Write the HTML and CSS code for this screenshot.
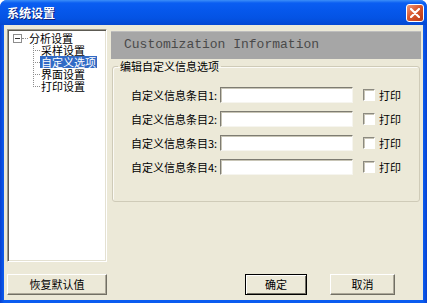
FILE: index.html
```html
<!DOCTYPE html>
<html lang="zh-CN">
<head>
<meta charset="UTF-8">
<title>系统设置</title>
<link rel="stylesheet" href="styles.css">
</head>
<body>
<div class="window">
    <div class="titlebar">
        <span class="title">系统设置</span>
        <a href="javascript:;" class="close">
            <svg width="10" height="10" viewBox="0 0 10 10"><path d="M1 1L9 9M9 1L1 9" stroke="#fff" stroke-width="2.2" stroke-linecap="round"/></svg>
        </a>
    </div>
    <div class="client">
        <div class="main">
            <div class="tree">
                <div class="root"><span class="toggle"></span><span class="link"></span><span class="tlabel">分析设置</span></div>
                <ul class="children">
                    <li><span class="tlabel">采样设置</span></li>
                    <li class="sel"><span class="tlabel">自定义选项</span></li>
                    <li><span class="tlabel">界面设置</span></li>
                    <li class="last"><span class="tlabel">打印设置</span></li>
                </ul>
            </div>
            <div class="panel">
                <div class="header">Customization Information</div>
                <fieldset class="group">
                    <legend>编辑自定义信息选项</legend>
                    <div class="rows">
                        <div class="row"><label>自定义信息条目1:</label><input class="field" type="text"><span class="check"></span><span class="print">打印</span></div>
                        <div class="row"><label>自定义信息条目2:</label><input class="field" type="text"><span class="check"></span><span class="print">打印</span></div>
                        <div class="row"><label>自定义信息条目3:</label><input class="field" type="text"><span class="check"></span><span class="print">打印</span></div>
                        <div class="row"><label>自定义信息条目4:</label><input class="field" type="text"><span class="check"></span><span class="print">打印</span></div>
                    </div>
                </fieldset>
            </div>
        </div>
        <div class="footer">
            <a href="javascript:;" class="btn restore">恢复默认值</a>
            <div class="actions">
                <a href="javascript:;" class="btn ok">确定</a>
                <a href="javascript:;" class="btn cancel">取消</a>
            </div>
        </div>
    </div>
</div>
</body>
</html>
```
FILE: styles.css
```css
body {
    margin: 0;
    background: #fff;
    font: 11px/13px "Noto Sans CJK SC", "Liberation Sans", sans-serif;
    color: #000;
}
ul {
    margin: 0;
    padding: 0;
    list-style: none;
}
.window {
    display: flex;
    flex-direction: column;
    width: 427px;
    height: 303px;
    background: linear-gradient(90deg, #0841d0, #0a5cf0 4px, #0a5cf0 423px, #0841d0);
    border-radius: 7px 7px 0 0;
}
.titlebar {
    display: flex;
    align-items: center;
    justify-content: space-between;
    height: 25px;
    padding: 0 3px 0 7px;
    border-radius: 7px 7px 0 0;
    background: linear-gradient(#3c8ff8 0, #0a5ef2 3px, #0658ec 10px, #0453e4 18px, #0348d2 25px);
}
.title {
    color: #fff;
    font-weight: bold;
    font-size: 12px;
    text-shadow: 1px 1px #0a1e7a;
}
.close {
    display: flex;
    align-items: center;
    justify-content: center;
    width: 16px;
    height: 16px;
    border: 1px solid #fff;
    border-radius: 3px;
    background: linear-gradient(135deg, #f09a7c, #d9572e 45%, #b83a16);
}
.client {
    flex: 1;
    display: flex;
    flex-direction: column;
    margin: 0 4px 3px 4px;
    padding: 4px 2px 0 3px;
    background: #ece9d8;
}
.main {
    display: flex;
}
.tree {
    width: 95px;
    height: 229px;
    background: #fff;
    border: 1px solid;
    border-color: #9d9a8c #fff #fff #9d9a8c;
    box-shadow: inset 1px 1px #5c5a52, inset -1px -1px #e4e1d2;
    padding: 2px 1px 0 2px;
}
.root {
    display: flex;
    align-items: center;
    height: 12px;
}
.toggle {
    width: 7px;
    height: 7px;
    margin-left: 3px;
    border: 1px solid #8d8d8d;
    background: linear-gradient(#333, #333) center/5px 1px no-repeat, #fff;
}
.link {
    width: 6px;
    border-top: 1px dotted #8d8d8d;
}
.tlabel {
    display: inline-block;
    padding: 0 1px;
    line-height: 12px;
    white-space: nowrap;
    vertical-align: top;
}
.children {
    margin-left: 23px;
}
.children li {
    height: 12px;
    padding-left: 7px;
    background:
        repeating-linear-gradient(#8d8d8d 0 1px, transparent 1px 2px) 0 0/1px 100% no-repeat,
        repeating-linear-gradient(90deg, #8d8d8d 0 1px, transparent 1px 2px) 0 6px/7px 1px no-repeat;
}
.children li.last {
    background:
        repeating-linear-gradient(#8d8d8d 0 1px, transparent 1px 2px) 0 0/1px 6px no-repeat,
        repeating-linear-gradient(90deg, #8d8d8d 0 1px, transparent 1px 2px) 0 6px/7px 1px no-repeat;
}
.children li.sel .tlabel {
    background: #316ac5;
    color: #fff;
}
.panel {
    flex: 1;
    margin-left: 4px;
    padding-top: 2px;
}
.header {
    height: 28px;
    padding-left: 13px;
    background: #a6a6a6;
    border-top: 1px solid #bdbdbd;
    box-sizing: border-box;
    font: 13px/26px "Liberation Mono", monospace;
    color: #4a4a4a;
}
.group {
    margin: 1px 1px 0 1px;
    padding: 0 0 26px 0;
    border: 1px solid #cfcbb8;
    border-radius: 3px;
    box-shadow: inset 1px 1px #fbfaf5;
}
.group legend {
    margin-left: 5px;
    padding: 0 2px;
    line-height: 13px;
}
.rows {
    display: flex;
    flex-direction: column;
    gap: 8px;
    padding: 14px 0 0 18px;
}
.row {
    display: flex;
    align-items: center;
    height: 16px;
}
.row label {
    width: 89px;
}
.field {
    width: 133px;
    height: 16px;
    margin: 0;
    padding: 0;
    box-sizing: border-box;
    border: 1px solid;
    border-color: #7e7c72 #f6f5ef #f6f5ef #7e7c72;
    box-shadow: inset 1px 1px #c8c5b6;
    background: #fff;
    outline: none;
}
.check {
    width: 12px;
    height: 12px;
    margin-left: 10px;
    box-sizing: border-box;
    border: 1px solid;
    border-color: #8c8a80 #fff #fff #8c8a80;
    box-shadow: inset 1px 1px #c8c5b6;
    background: #fff;
}
.print {
    margin-left: 4px;
}
.footer {
    display: flex;
    justify-content: space-between;
    margin-top: 12px;
    padding-right: 26px;
}
.actions {
    display: flex;
    gap: 23px;
}
.btn {
    display: block;
    height: 21px;
    box-sizing: border-box;
    line-height: 19px;
    text-align: center;
    text-decoration: none;
    color: #000;
    background: #ece9d8;
    border: 1px solid;
    border-color: #fff #716f64 #716f64 #fff;
    box-shadow: inset -1px -1px #aca899;
}
.restore {
    width: 100px;
}
.ok {
    width: 62px;
    border-color: #000;
    box-shadow: inset 1px 1px #fff, inset -1px -1px #716f64;
}
.cancel {
    width: 65px;
}
```
